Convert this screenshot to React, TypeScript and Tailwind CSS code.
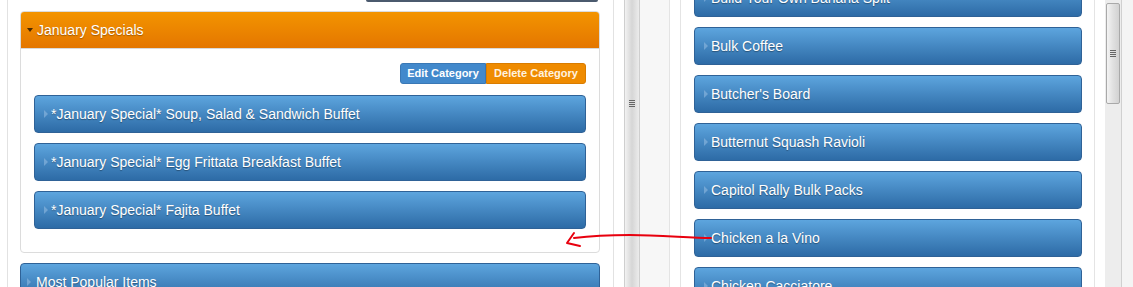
import React from 'react';

const specials = [
  '*January Special* Soup, Salad & Sandwich Buffet',
  '*January Special* Egg Frittata Breakfast Buffet',
  '*January Special* Fajita Buffet',
];

const rightItems = [
  'Build Your Own Banana Split',
  'Bulk Coffee',
  "Butcher's Board",
  'Butternut Squash Ravioli',
  'Capitol Rally Bulk Packs',
  'Chicken a la Vino',
  'Chicken Cacciatore',
];

function ItemBar({ label, className = '' }: { label: string; className?: string }) {
  return (
    <div
      className={`flex items-center h-[38px] shrink-0 rounded-[4px] border border-[#2f6297] bg-gradient-to-b from-[#5da5de] to-[#2d6ba6] text-white text-[14px] [text-shadow:0_1px_1px_rgba(0,0,0,0.35)] ${className}`}
    >
      <span className="ml-[9px] mr-[3px] w-0 h-0 border-l-[4px] border-l-[#8fb9e0] border-y-[4px] border-y-transparent opacity-60"></span>
      <span>{label}</span>
    </div>
  );
}

function Grip() {
  return (
    <div className="flex flex-col gap-[1px]">
      <div className="w-[6px] h-[1px] bg-[#666]"></div>
      <div className="w-[6px] h-[1px] bg-[#666]"></div>
      <div className="w-[6px] h-[1px] bg-[#666]"></div>
      <div className="w-[6px] h-[1px] bg-[#666]"></div>
    </div>
  );
}

export default function App() {
  return (
    <div className="relative flex w-[1133px] h-[287px] overflow-hidden bg-white font-['Liberation_Sans',Arial,sans-serif]">
      {/* Left pane */}
      <div className="ml-[7px] w-[607px] shrink-0 border-l border-r border-[#e2e2e2] pl-[12px] pr-[13px] flex flex-col">
        <div className="ml-[346px] w-[232px] h-[2px] shrink-0 bg-[#4b5a6e] rounded-b-[2px]"></div>
        <div className="mt-[9px] shrink-0 border border-[#dcdcdc] rounded-[4px] flex flex-col">
          <div className="h-[37px] shrink-0 flex items-center rounded-t-[3px] bg-gradient-to-b from-[#f39400] to-[#e47600] border-b border-[#d9d9d9] text-white text-[14px] [text-shadow:0_1px_1px_rgba(0,0,0,0.3)]">
            <span className="ml-[6px] mr-[4px] w-0 h-0 border-t-[4px] border-t-[#4a2a00] border-x-[3px] border-x-transparent"></span>
            <span>January Specials</span>
          </div>
          <div className="pt-[14px] pb-[23px] pl-[13px] pr-[13px] flex flex-col">
            <div className="flex justify-end shrink-0">
              <div className="flex h-[21px] text-[11px] font-bold text-white">
                <span className="flex items-center justify-center w-[86px] rounded-l-[3px] bg-[#4289cc] border border-[#3a78b5]">Edit Category</span>
                <span className="flex items-center justify-center w-[100px] rounded-r-[3px] bg-[#ef8b00] border border-[#d97c00] text-[#fff3e0]">Delete Category</span>
              </div>
            </div>
            <div className="mt-[11px] flex flex-col gap-[10px]">
              {specials.map((s) => (
                <ItemBar key={s} label={s} />
              ))}
            </div>
          </div>
        </div>
        <div className="mt-[10px] flex items-center h-[38px] shrink-0 rounded-[4px] border border-[#2f6297] bg-gradient-to-b from-[#5da5de] to-[#2d6ba6] text-white text-[14px] [text-shadow:0_1px_1px_rgba(0,0,0,0.35)]">
          <span className="ml-[6px] mr-[5px] w-0 h-0 border-l-[4px] border-l-[#8fb9e0] border-y-[4px] border-y-transparent opacity-60"></span>
          <span>Most Popular Items</span>
        </div>
      </div>

      {/* Splitter */}
      <div className="ml-[10px] w-[16px] shrink-0 flex items-start justify-center border-x border-[#cfcfcf] bg-gradient-to-r from-[#f2f2f2] via-[#d6d6d6] to-[#ececec]">
        <div className="mt-[100px]">
          <Grip />
        </div>
      </div>
      <div className="w-[30px] shrink-0 bg-[#f7f7f7] border-r border-[#e4e4e4]"></div>

      {/* Right pane */}
      <div className="ml-[10px] w-[415px] shrink-0 border-l border-r border-[#e4e4e4] pl-[13px] pr-[12px] flex flex-col gap-[10px]">
        {rightItems.map((s, i) => (
          <ItemBar key={s} label={s} className={i === 0 ? 'mt-[-21px]' : ''} />
        ))}
      </div>

      {/* Scrollbar */}
      <div className="ml-[10px] w-[17px] shrink-0 bg-[#ededed] border-r border-[#d0d0d0] pt-[3px] px-[1px]">
        <div className="h-[101px] rounded-[2px] border border-[#a9a9a9] bg-gradient-to-r from-[#f4f4f4] via-[#e0e0e0] to-[#d2d2d2] flex items-center justify-center">
          <Grip />
        </div>
      </div>
      <div className="flex-1 bg-[#f4f4f4]"></div>

      {/* Hand-drawn annotation arrow */}
      <svg className="absolute left-0 top-0 pointer-events-none" width="1133" height="287">
        <path d="M711 238 C 690 238, 660 235, 630 235 C 605 235, 590 236, 574 238" fill="none" stroke="#e8000e" strokeWidth="2" strokeLinecap="round" />
        <path d="M574 233 L567 243 L580 246" fill="none" stroke="#e8000e" strokeWidth="2" strokeLinejoin="round" strokeLinecap="round" />
      </svg>
    </div>
  );
}
